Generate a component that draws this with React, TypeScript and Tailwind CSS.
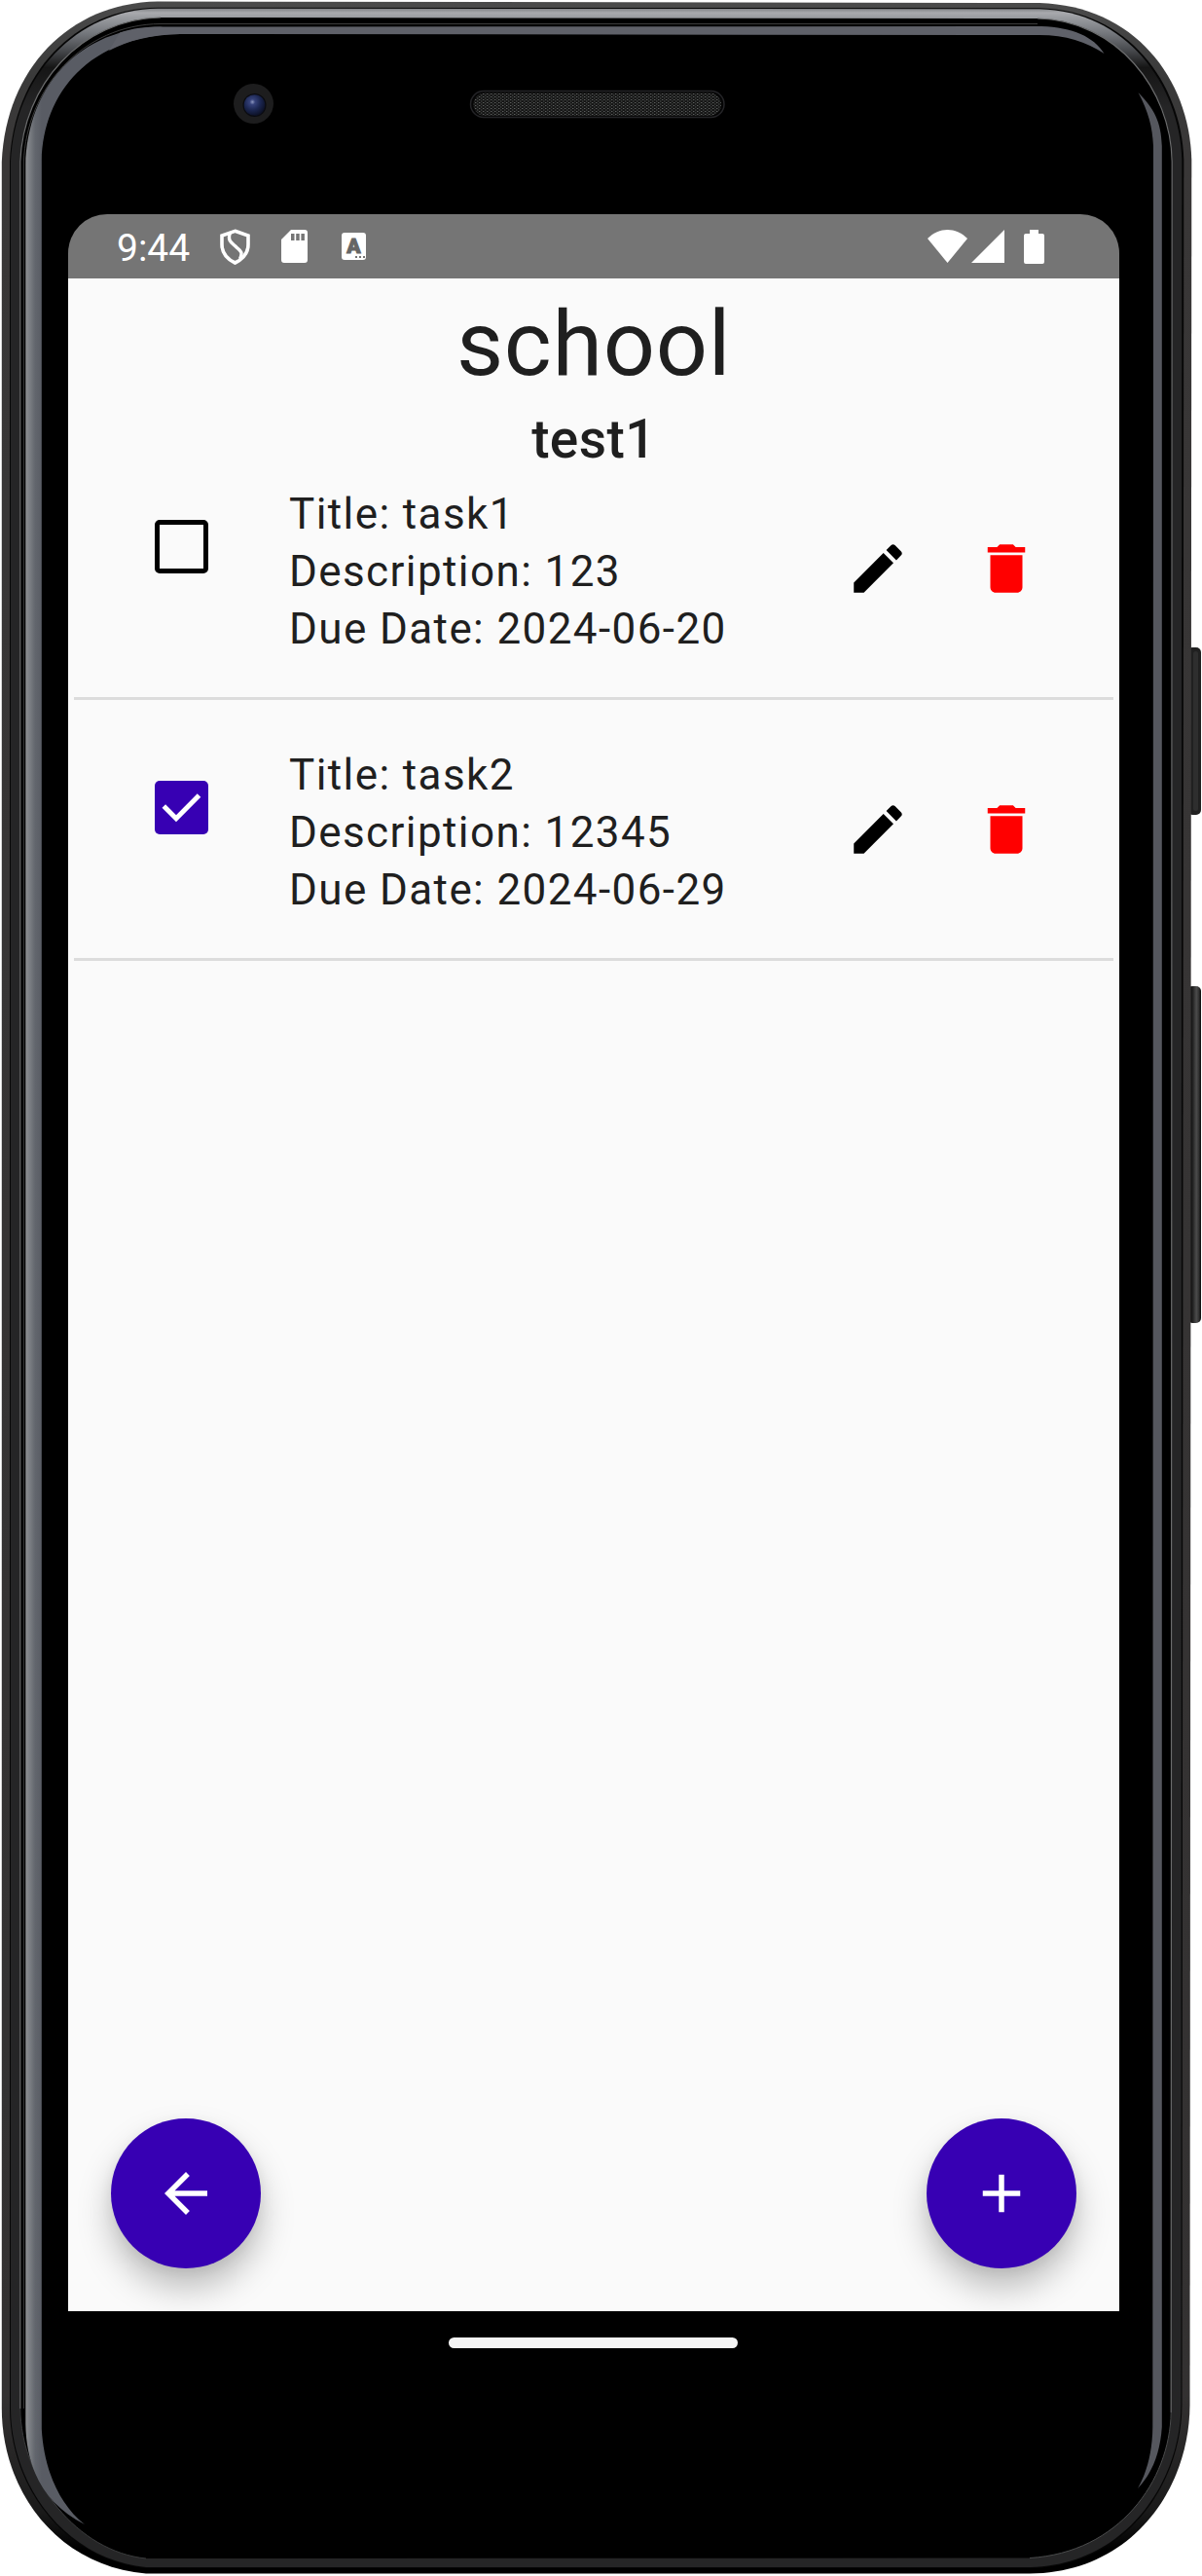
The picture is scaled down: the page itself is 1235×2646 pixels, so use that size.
import React from "react";

type Task = { title: string; description: string; due: string; done: boolean };

const tasks: Task[] = [
  { title: "task1", description: "123", due: "2024-06-20", done: false },
  { title: "task2", description: "12345", due: "2024-06-29", done: true },
];

const ICONS = {
  edit: "M3 17.25V21h3.75L17.81 9.94l-3.75-3.75L3 17.25zM20.71 7.04c.39-.39.39-1.02 0-1.41l-2.34-2.34c-.39-.39-1.02-.39-1.41 0l-1.83 1.83 3.75 3.75 1.83-1.83z",
  remove: "M6 19c0 1.1.9 2 2 2h8c1.1 0 2-.9 2-2V7H6v12zM19 4h-3.5l-1-1h-5l-1 1H5v2h14V4z",
  back: "M20 11H7.83l5.59-5.59L12 4l-8 8 8 8 1.41-1.41L7.83 13H20v-2z",
  add: "M19 13h-6v6h-2v-6H5v-2h6V5h2v6h6v2z",
};

function Icon({ name, className }: { name: keyof typeof ICONS; className?: string }) {
  return (
    <svg viewBox="0 0 24 24" className={`size-[66px] fill-current ${className ?? ""}`}>
      <path d={ICONS[name]} />
    </svg>
  );
}

/* Handset body: metal rim, glass reflections, camera, earpiece and side keys. */
function DeviceShell() {
  return (
    <svg viewBox="0 0 1235 2646" className="pointer-events-none absolute inset-0 h-[2646px] w-[1235px]">
      <defs>
        <linearGradient id="rim" x1="0" y1="0" x2="0" y2="2646" gradientUnits="userSpaceOnUse">
          <stop offset="0" stopColor="#4b4b4b" />
          <stop offset=".03" stopColor="#3a3a3a" />
          <stop offset=".06" stopColor="#393737" />
          <stop offset=".93" stopColor="#333131" />
          <stop offset=".975" stopColor="#1a1a1a" />
          <stop offset=".99" stopColor="#000" />
        </linearGradient>
        <linearGradient id="bevel" x1="0" y1="8" x2="0" y2="110" gradientUnits="userSpaceOnUse">
          <stop offset="0" stopColor="#77797c" />
          <stop offset=".05" stopColor="#a9aaae" />
          <stop offset=".09" stopColor="#9c9ea2" />
          <stop offset=".25" stopColor="#76797e" />
          <stop offset=".42" stopColor="#4a4c50" />
          <stop offset=".6" stopColor="#161616" />
          <stop offset="1" stopColor="#252526" />
        </linearGradient>
        <linearGradient id="glass" x1="26" y1="0" x2="43" y2="0" gradientUnits="userSpaceOnUse">
          <stop offset="0" stopColor="#8f9193" />
          <stop offset=".25" stopColor="#7c7f84" />
          <stop offset=".6" stopColor="#62666d" />
          <stop offset="1" stopColor="#595c64" />
        </linearGradient>
        <linearGradient id="key" x1="1222" y1="0" x2="1234" y2="0" gradientUnits="userSpaceOnUse">
          <stop offset="0" stopColor="#0c0c0c" />
          <stop offset=".25" stopColor="#1c1c1c" />
          <stop offset=".6" stopColor="#4c4c4c" />
          <stop offset=".8" stopColor="#333" />
          <stop offset="1" stopColor="#0a0a0a" />
        </linearGradient>
        <radialGradient id="lens" cx=".4" cy=".35" r=".65">
          <stop offset="0" stopColor="#8d97c0" />
          <stop offset=".2" stopColor="#36427a" />
          <stop offset=".6" stopColor="#1b2650" />
          <stop offset="1" stopColor="#0d1228" />
        </radialGradient>
        <pattern id="mesh" width="4" height="3" patternUnits="userSpaceOnUse">
          <rect width="4" height="3" fill="#161616" />
          <rect width="1.4" height="1" fill="#5c5f5e" />
          <rect x="2" y="1.5" width="1.4" height="1" fill="#505352" />
        </pattern>
      </defs>

      <rect x="1220" y="665" width="14" height="172" rx="5" fill="#202020" />
      <rect x="1226" y="669" width="5" height="164" rx="2.5" fill="#2e2e2e" />
      <rect x="1220" y="1013" width="14" height="346" rx="5" fill="url(#key)" />

      <path fill="url(#rim)" d="M162 1.5 L1068 3 C1165 6 1222 80 1224.3 164 L1222.5 2470 C1222 2560 1160 2643 1058 2643.5 L150 2643.5 C60 2636 2 2560 1.8 2474 L1.8 166 C6 72 70 3 162 1.5Z" />
      <path fill="#060606" d="M162 7.8 L1068 8.2 C1158 10 1214 85 1216.3 164 L1214.5 2470 C1214 2553 1155 2637 1058 2638 L150 2638 C68 2630 10.5 2556 10 2474 L10 166 C14 76 76 9 162 7.8Z" />
      <path fill="url(#bevel)" d="M162 8.8 L1068 9.2 C1156 11 1212 86 1214.3 164 L1213.5 2470 C1213 2551 1155 2635 1058 2637 L150 2637 C69 2629 11.5 2555 11 2474 L11 166 C15 78 78 10 162 8.8Z" />
      <path fill="#000" d="M165 18 L1066 19 C1148 21 1203 92 1204.5 166 L1203.5 2478 C1202 2548 1150 2622 1058 2627.5 L150 2628 C80 2621 21.5 2548 20.5 2474 L20.5 166 C24 88 82 20 165 18Z" />
      <path fill="none" stroke="#6b6c6d" strokeWidth="1.2" d="M1066 19 C1148 21 1203 92 1204.2 166 L1203.2 2478" />
      <path fill="none" stroke="#4a4b4c" strokeWidth="1" d="M1203.2 2478 C1202 2548 1150 2622 1058 2627.5" />
      <path fill="none" stroke="#6b6c6d" strokeWidth="1.2" d="M20.800 2474 L20.800 166 C24 88 82 20 165 18" />
      <path fill="none" stroke="#3a3b3c" strokeWidth="1" d="M150 2628 C80 2621 21.500 2548 20.800 2474" />
      <path fill="none" stroke="#3c3c3c" strokeWidth="1" d="M24.4 2474 L24.4 166 C27 92 84 25 165 24.5 L1066 24.5" />

      <path fill="url(#glass)" d="M87 2593 C45 2572 27 2535 26.3 2490 L26.3 170 C28 88 82 29 165 27.5 L180 31 L185 35 C92 36 44 96 42.8 165 L42.8 2495 C45 2535 60 2572 87 2593Z" />
      <path fill="#5f6169" d="M123 33.500 C136 29 150 27.500 165 27.500 L1070 27 C1102 28 1124 38 1134.500 55 C1116 43 1095 36 1068 36 L185 35 C155 35.500 131 42 112 52Z" />
      <path fill="#55575e" d="M1169.500 95 C1186 112 1193 125 1193.800 150 L1193.800 2493 C1192 2520 1184 2540 1169 2556 C1178 2540 1184 2520 1184.300 2493 L1185 150 C1184 130 1180 115 1169.500 95Z" />

      <circle cx="260.500" cy="106.500" r="20.500" fill="#1d1d1e" />
      <circle cx="261.500" cy="108" r="12" fill="#0a0b10" />
      <circle cx="261.500" cy="108" r="10.800" fill="url(#lens)" />
      <rect x="483.500" y="93.500" width="260.500" height="27" rx="13.500" fill="#050505" stroke="#242427" strokeWidth="1.500" />
      <rect x="486.500" y="95.500" width="254.500" height="23.500" rx="11.700" fill="url(#mesh)" />
    </svg>
  );
}

function StatusBar() {
  return (
    <div className="flex h-[66px] items-center rounded-t-[40px] bg-[#757575] pr-[77px] pl-[50px] text-white">
      <span className="w-[106px] pt-[3px] text-[39px] leading-[66px]">9:44</span>
      <svg viewBox="0 0 31 37" className="h-[37px] w-[31px]" fill="none" stroke="#fff">
        <path strokeWidth="3.600" d="M15.500 2.300 L29 7 V16 C29 25 23 31.500 15.500 35 C8 31.500 2 25 2 16 V7Z" />
        <path strokeWidth="3.400" d="M10.500 4 C7 13 13 15 17 19 C21 22.500 24 24 20.500 31" />
      </svg>
      <svg viewBox="0 0 27 34" className="ml-8 h-[34px] w-[27px]">
        <path fill="#fff" fillRule="evenodd" d="M10 0H24Q27 0 27 3V31Q27 34 24 34H3Q0 34 0 31V10ZM10 4V11H13.500V4ZM15.200 4V11H18.700V4ZM20.400 4V11H23.900V4Z" />
      </svg>
      <div className="ml-[35px] flex h-[28px] w-[25px] flex-col items-center rounded-[3px] bg-white text-[#666666]">
        <span className="h-[23px] text-[21px] leading-[28px] font-black [-webkit-text-stroke:1px_#666666]">A</span>
        <span className="mr-px flex gap-[2px] self-end pt-px">
          <i className="size-[2px] bg-[#757575]" />
          <i className="size-[2px] bg-[#757575]" />
          <i className="size-[2px] bg-[#757575]" />
        </span>
      </div>
      <div className="ml-auto flex items-center">
        <svg viewBox="0 0 41 34" className="h-[34px] w-[41px] fill-white">
          <path d="M20.500 34 L0 9 C12 -3 29 -3 41 9Z" />
        </svg>
        <svg viewBox="0 0 34 34" className="ml-1 h-[34px] w-[34px] fill-white">
          <path d="M34 0V34H0Z" />
        </svg>
        <svg viewBox="0 0 21 35" className="ml-5 h-[35px] w-[21px] fill-white">
          <path d="M6 0H15V4H19Q21 4 21 6V33Q21 35 19 35H2Q0 35 0 33V6Q0 4 2 4H6Z" />
        </svg>
      </div>
    </div>
  );
}

function Checkbox({ checked }: { checked: boolean }) {
  if (!checked) {
    return <div className="size-[55px] rounded-[5px] border-[5px] border-black" />;
  }
  return (
    <div className="size-[55px] rounded-[5px] bg-[#3700b3]">
      <svg viewBox="0 0 55 55" className="size-[55px]" fill="none" stroke="#fff" strokeWidth="5">
        <path d="M9.300 26 L22 38.700 L45.500 15" />
      </svg>
    </div>
  );
}

function TaskRow({ task }: { task: Task }) {
  return (
    <li className="mx-[6px] flex h-[222px] items-start border-b-[3px] border-[#dcdcdc]">
      <div className="mt-[37px] ml-[83px]">
        <Checkbox checked={task.done} />
      </div>
      <div className="mt-[1.500px] ml-[83px] flex-1 text-[44px] leading-[59px] tracking-[1.400px] whitespace-nowrap">
        <p>Title: {task.title}</p>
        <p>Description: {task.description}</p>
        <p>Due Date: {task.due}</p>
      </div>
      <div className="mt-[54px] mr-[77px] flex gap-[66px]">
        <Icon name="edit" className="text-black" />
        <Icon name="remove" className="text-[#ff0000]" />
      </div>
    </li>
  );
}

function Fab({ icon }: { icon: "back" | "add" }) {
  return (
    <button className="flex size-[154px] items-center justify-center rounded-full bg-[#3700b3] text-white shadow-[0_20px_34px_rgba(0,0,0,0.25),0_4px_14px_rgba(0,0,0,0.06)]">
      <Icon name={icon} />
    </button>
  );
}

export default function App() {
  return (
    <div className="relative h-[2646px] w-[1235px] overflow-hidden bg-white font-['Roboto',sans-serif]">
      <DeviceShell />
      <div className="relative ml-[70px] flex w-[1080px] flex-col pt-[220px]">
        <StatusBar />
        <main className="flex h-[2088px] flex-col overflow-hidden bg-[#fafafa] text-[#1f1f1f]">
          <h1 className="mt-3 text-center text-[93.500px] leading-[110px] tracking-[0.690px]">school</h1>
          <h2 className="mt-[10px] text-center text-[55px] leading-[66px] font-medium tracking-[0.410px]">test1</h2>
          <ul className="mt-[13px] flex flex-col gap-[46px]">
            {tasks.map((t) => (
              <TaskRow key={t.title} task={t} />
            ))}
          </ul>
          <div className="mt-auto mb-11 flex justify-between px-11">
            <Fab icon="back" />
            <Fab icon="add" />
          </div>
        </main>
        <div className="mt-[27px] ml-[391px] h-[11px] w-[297px] rounded-full bg-[#f5f5f5]" />
      </div>
    </div>
  );
}
